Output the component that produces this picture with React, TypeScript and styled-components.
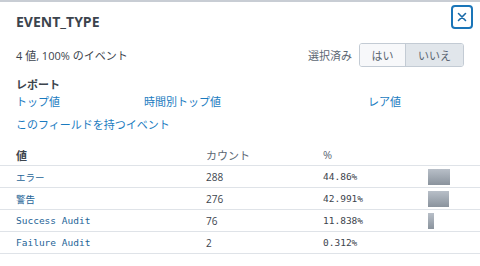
import { FC } from "react";
import styled, { createGlobalStyle } from "styled-components";

const GlobalStyle = createGlobalStyle`
  html, body {
    margin: 0;
    padding: 0;
    background: #fff;
  }
  body {
    font-family: "Open Sans", "Noto Sans CJK JP", sans-serif;
    color: #3c444d;
  }
`;

const Panel = styled.div`
  width: 480px;
  height: 266px;
  box-sizing: border-box;
  border-top: 2px solid #c8cdd4;
  overflow: hidden;
`;

const Header = styled.div`
  display: flex;
  justify-content: space-between;
  align-items: flex-start;
  padding: 3px 7px 0 16px;
  height: 29px;
`;

const Title = styled.div`
  font-family: "Open Sans", sans-serif;
  font-weight: bold;
  font-size: 14px;
  line-height: 18px;
  margin-top: 8px;
  color: #3c444d;
`;

const CloseButton = styled.button`
  width: 22px;
  height: 24px;
  box-sizing: border-box;
  border: 2px solid #1a75b8;
  border-radius: 4px;
  background: #fff;
  padding: 0;
  display: flex;
  align-items: center;
  justify-content: center;
  color: #1a6aa8;
`;

const SummaryRow = styled.div`
  display: flex;
  justify-content: space-between;
  align-items: center;
  padding: 0 16px;
  margin-top: 8px;
  height: 26px;
`;

const Summary = styled.div`
  font-size: 11px;
`;

const SelectGroup = styled.div`
  display: flex;
  align-items: center;
  gap: 7px;
  font-size: 11px;
  color: #5c6773;
`;

const Toggle = styled.div`
  display: flex;
  border: 1px solid #c3cbd4;
  border-radius: 3px;
  overflow: hidden;
  height: 24px;
  box-sizing: border-box;
`;

const ToggleOption = styled.div<{ $active?: boolean }>`
  display: flex;
  align-items: center;
  justify-content: center;
  width: ${({ $active }) => ($active ? 57 : 45)}px;
  background: ${({ $active }) => ($active ? "#e1e6eb" : "#f7f8fa")};
  border-left: ${({ $active }) => ($active ? "1px solid #c3cbd4" : "none")};
  font-size: 11px;
  color: #5c6773;
`;

const Reports = styled.div`
  padding: 0 16px;
  margin-top: 9px;
`;

const SectionTitle = styled.div`
  font-weight: bold;
  font-size: 11px;
  line-height: 16px;
`;

const LinkRow = styled.div`
  display: grid;
  grid-template-columns: 128px 224px 1fr;
  font-size: 11px;
  line-height: 18px;
`;

const Link = styled.a`
  color: #1a7bbf;
  text-decoration: none;
  cursor: pointer;
`;

const FieldLink = styled(Link)`
  display: block;
  font-size: 11px;
  line-height: 18px;
  margin-top: 5px;
`;

const Table = styled.div`
  margin-top: 10px;
`;

const Row = styled.div`
  display: grid;
  grid-template-columns: 190px 117px 105px 1fr;
  padding-left: 16px;
  height: 21px;
  align-items: center;
  border-bottom: 1px solid #dfe3e8;
`;

const HeadCell = styled.div<{ $strong?: boolean }>`
  font-size: 11px;
  font-weight: ${({ $strong }) => ($strong ? "bold" : "normal")};
  color: ${({ $strong }) => ($strong ? "#3c444d" : "#5c6773")};
`;

const ValueCell = styled.div`
  font-family: "DejaVu Sans Mono", "Noto Sans CJK JP", monospace;
  font-size: 9.5px;
  color: #1e6497;
`;

const CountCell = styled.div`
  font-size: 10px;
  color: #3c444d;
`;

const PercentCell = styled.div`
  font-family: "DejaVu Sans Mono", monospace;
  font-size: 9.5px;
  color: #3c444d;
`;

const Bar = styled.div`
  height: 16px;
  background: linear-gradient(#b8bfc8, #8a939d);
`;

const rows = [
  { value: "エラー", count: 288, pct: "44.86%", ratio: 0.4486 },
  { value: "警告", count: 276, pct: "42.991%", ratio: 0.42991 },
  { value: "Success Audit", count: 76, pct: "11.838%", ratio: 0.11838 },
  { value: "Failure Audit", count: 2, pct: "0.312%", ratio: 0.00312 },
];

const BAR_TRACK = 48;

export const App: FC = () => (
  <>
    <GlobalStyle />
    <Panel>
      <Header>
        <Title>EVENT_TYPE</Title>
        <CloseButton aria-label="close">
          <svg width="10" height="10" viewBox="0 0 10 10">
            <path
              d="M1.5 1.5 L8.5 8.5 M8.5 1.5 L1.5 8.5"
              stroke="currentColor"
              strokeWidth="1.6"
              strokeLinecap="round"
            />
          </svg>
        </CloseButton>
      </Header>
      <SummaryRow>
        <Summary>4 値, 100% のイベント</Summary>
        <SelectGroup>
          選択済み
          <Toggle>
            <ToggleOption>はい</ToggleOption>
            <ToggleOption $active>いいえ</ToggleOption>
          </Toggle>
        </SelectGroup>
      </SummaryRow>
      <Reports>
        <SectionTitle>レポート</SectionTitle>
        <LinkRow>
          <Link>トップ値</Link>
          <Link>時間別トップ値</Link>
          <Link>レア値</Link>
        </LinkRow>
        <FieldLink>このフィールドを持つイベント</FieldLink>
      </Reports>
      <Table>
        <Row>
          <HeadCell $strong>値</HeadCell>
          <HeadCell>カウント</HeadCell>
          <HeadCell>%</HeadCell>
          <div />
        </Row>
        {rows.map(r => (
          <Row key={r.value}>
            <ValueCell>{r.value}</ValueCell>
            <CountCell>{r.count}</CountCell>
            <PercentCell>{r.pct}</PercentCell>
            <div>
              {r.ratio > 0.01 && (
                <Bar style={{ width: Math.round(r.ratio * BAR_TRACK) }} />
              )}
            </div>
          </Row>
        ))}
      </Table>
    </Panel>
  </>
);

export default App;
